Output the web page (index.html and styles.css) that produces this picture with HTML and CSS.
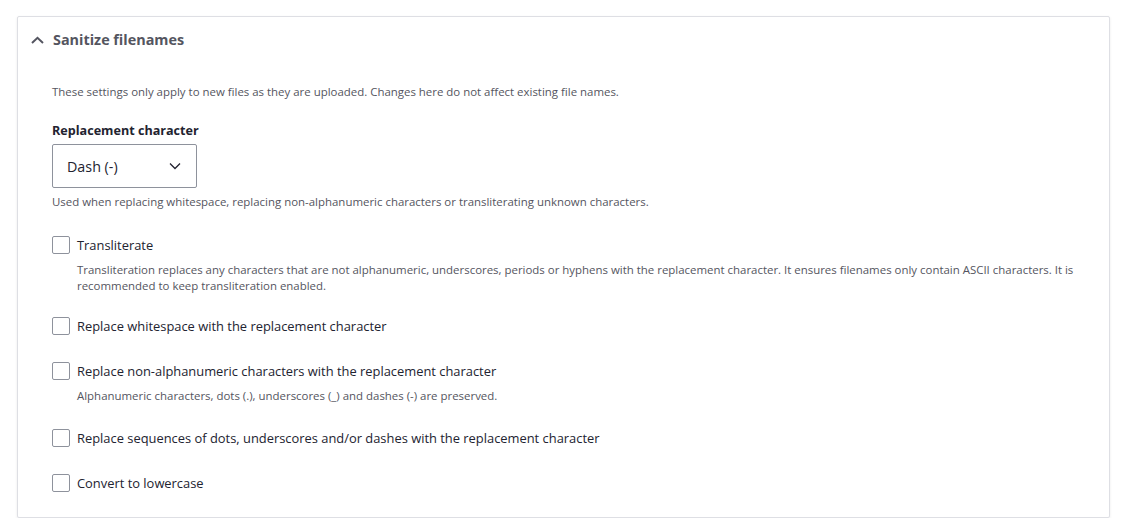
FILE: index.html
```html
<!DOCTYPE html>
<html lang="en">
<head>
<meta charset="utf-8">
<title>Sanitize filenames</title>
<link rel="stylesheet" href="styles.css">
</head>
<body>
<details class="card" open>
  <summary class="card-head">
    <svg class="chev" width="13" height="8" viewBox="0 0 13 8"><path d="M1 7 L6.5 1.8 L12 7" fill="none" stroke="#545560" stroke-width="2"/></svg>
    <span class="title">Sanitize filenames</span>
  </summary>
  <div class="card-body">
    <p class="desc intro">These settings only apply to new files as they are uploaded. Changes here do not affect existing file names.</p>
    <div class="field">
      <label class="field-label">Replacement character</label>
      <div class="select">
        <span class="select-value">Dash (-)</span>
        <svg class="select-chev" width="12" height="8" viewBox="0 0 12 8"><path d="M1 1.5 L6 6.5 L11 1.5" fill="none" stroke="#222330" stroke-width="1.3"/></svg>
      </div>
      <p class="desc help">Used when replacing whitespace, replacing non-alphanumeric characters or transliterating unknown characters.</p>
    </div>
    <div class="check has-desc">
      <div class="check-row"><span class="box"></span><span class="check-label">Transliterate</span></div>
      <p class="desc check-desc">Transliteration replaces any characters that are not alphanumeric, underscores, periods or hyphens with the replacement character. It ensures filenames only contain ASCII characters. It is recommended to keep transliteration enabled.</p>
    </div>
    <div class="check">
      <div class="check-row"><span class="box"></span><span class="check-label">Replace whitespace with the replacement character</span></div>
    </div>
    <div class="check has-desc short-desc">
      <div class="check-row"><span class="box"></span><span class="check-label">Replace non-alphanumeric characters with the replacement character</span></div>
      <p class="desc check-desc">Alphanumeric characters, dots (.), underscores (_) and dashes (-) are preserved.</p>
    </div>
    <div class="check">
      <div class="check-row"><span class="box"></span><span class="check-label">Replace sequences of dots, underscores and/or dashes with the replacement character</span></div>
    </div>
    <div class="check last">
      <div class="check-row"><span class="box"></span><span class="check-label">Convert to lowercase</span></div>
    </div>
  </div>
</details>
</body>
</html>
```
FILE: styles.css
```css
html, body { margin: 0; padding: 0; background: #fff; }
body {
  padding: 16px 16px 0 17px;
  font-family: "Open Sans", "Liberation Sans", sans-serif;
  color: #222330;
}
.card {
  border: 1px solid #dedfe4;
  border-radius: 2px;
  box-shadow: 0 1px 3px rgba(0,0,0,0.08);
  background: #fff;
  height: 502px;
  box-sizing: border-box;
}
.card-head {
  list-style: none;
  display: flex;
  align-items: center;
  height: 45px;
  padding-left: 13px;
  cursor: pointer;
}
.card-head::-webkit-details-marker { display: none; }
.chev { margin-right: 9px; }
.title {
  font-weight: 700;
  font-size: 14.4px;
  color: #545560;
}
.card-body { padding: 22px 34px 0 34px; }
.desc {
  margin: 0;
  font-size: 11.45px;
  line-height: 16px;
  color: #545560;
}
.intro { margin-bottom: 22px; }
.field-label {
  display: block;
  font-weight: 700;
  font-size: 12.6px;
  line-height: 18px;
  color: #222330;
  margin-bottom: 4px;
}
.select {
  width: 145px;
  height: 44px;
  box-sizing: border-box;
  border: 1px solid #8e929c;
  border-radius: 2px;
  display: flex;
  align-items: center;
  justify-content: space-between;
  padding: 0 15px 0 14px;
}
.select-value { font-size: 14.3px; color: #222330; }
.help { margin-top: 6px; margin-bottom: 26px; }
.check { margin-bottom: 27px; }
.check.has-desc { margin-bottom: 23px; }
.check.short-desc { margin-bottom: 25px; }
.check-row { display: flex; align-items: center; height: 18px; }
.box {
  width: 18px; height: 18px;
  box-sizing: border-box;
  border: 1px solid #8e929c;
  border-radius: 2px;
  margin-right: 7px;
}
.check-label { font-size: 12.9px; color: #222330; }
.check-desc { padding-left: 25px; margin-top: 8px; }
```
